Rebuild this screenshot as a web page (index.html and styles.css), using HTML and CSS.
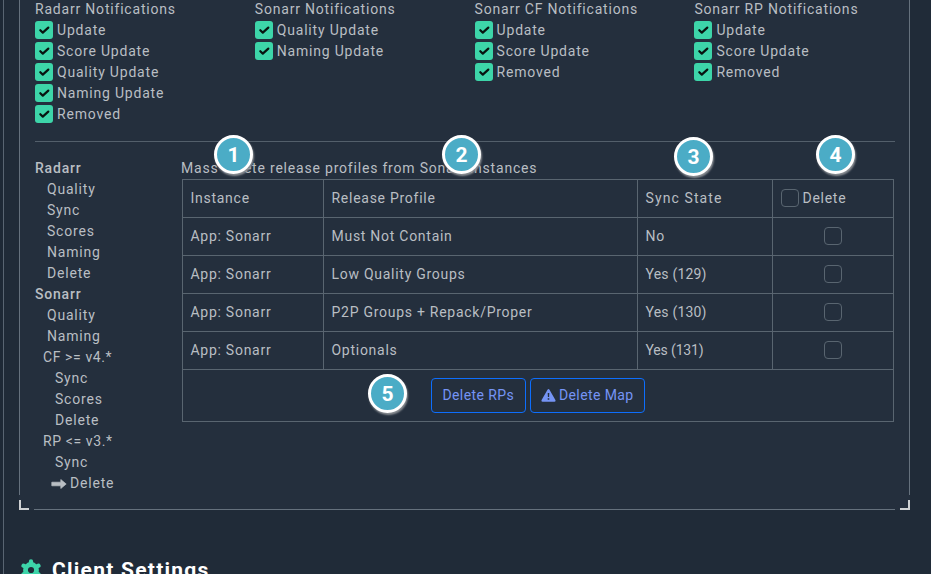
FILE: index.html
```html
<!DOCTYPE html>
<html lang="en">
<head>
<meta charset="utf-8">
<title>Notifiarr</title>
<link rel="stylesheet" href="styles.css">
</head>
<body>
<svg class="defs"><symbol id="tick" viewBox="0 0 18 18"><path d="M5.3 9.200 7.8 11.600 13.3 6.600" fill="none" stroke="#081410" stroke-width="2.200" stroke-linecap="round" stroke-linejoin="round"/></symbol></svg>
<main class="page">
<section class="panel">
  <div class="notifications">
    <div><h4>Radarr Notifications</h4>
      <label><svg class="check"><use href="#tick"/></svg>Update</label>
      <label><svg class="check"><use href="#tick"/></svg>Score Update</label>
      <label><svg class="check"><use href="#tick"/></svg>Quality Update</label>
      <label><svg class="check"><use href="#tick"/></svg>Naming Update</label>
      <label><svg class="check"><use href="#tick"/></svg>Removed</label></div>
    <div><h4>Sonarr Notifications</h4>
      <label><svg class="check"><use href="#tick"/></svg>Quality Update</label>
      <label><svg class="check"><use href="#tick"/></svg>Naming Update</label></div>
    <div><h4>Sonarr CF Notifications</h4>
      <label><svg class="check"><use href="#tick"/></svg>Update</label>
      <label><svg class="check"><use href="#tick"/></svg>Score Update</label>
      <label><svg class="check"><use href="#tick"/></svg>Removed</label></div>
    <div><h4>Sonarr RP Notifications</h4>
      <label><svg class="check"><use href="#tick"/></svg>Update</label>
      <label><svg class="check"><use href="#tick"/></svg>Score Update</label>
      <label><svg class="check"><use href="#tick"/></svg>Removed</label></div>
  </div>
  <hr>
  <div class="content">
    <nav>
      <div class="group">Radarr</div>
      <div class="item">Quality</div><div class="item">Sync</div><div class="item">Scores</div><div class="item">Naming</div><div class="item">Delete</div>
      <div class="group">Sonarr</div>
      <div class="item">Quality</div><div class="item">Naming</div>
      <div class="version">CF &gt;= v4.*</div>
      <div class="sub">Sync</div><div class="sub">Scores</div><div class="sub">Delete</div>
      <div class="version">RP &lt;= v3.*</div>
      <div class="sub">Sync</div>
      <div class="current"><svg class="arrow" viewBox="0 0 16 10"><path d="M.8 3.200h9V.5L15.200 5 9.800 9.500V6.800h-9z" fill="currentColor" stroke="currentColor" stroke-width=".7" stroke-linejoin="round"/></svg>Delete</div>
    </nav>
    <div class="profiles">
      <div class="caption">Mass delete release profiles from Sonarr instances</div>
      <table>
        <colgroup><col class="c1"><col class="c2"><col class="c3"><col class="c4"></colgroup>
        <tr><td>Instance</td><td>Release Profile</td><td class="state">Sync State</td><td><span class="all"><i class="box"></i>Delete</span></td></tr>
        <tr><td>App: Sonarr</td><td>Must Not Contain</td><td>No</td><td class="pick"><i class="box"></i></td></tr>
        <tr><td>App: Sonarr</td><td>Low Quality Groups</td><td class="synced">Yes (129)</td><td class="pick"><i class="box"></i></td></tr>
        <tr><td>App: Sonarr</td><td>P2P Groups + Repack/Proper</td><td class="synced">Yes (130)</td><td class="pick"><i class="box"></i></td></tr>
        <tr><td>App: Sonarr</td><td>Optionals</td><td class="synced last">Yes (131)</td><td class="pick"><i class="box"></i></td></tr>
        <tr class="actions"><td colspan="4"><div class="buttons"><button class="rps">Delete RPs</button><button class="map"><svg class="warn" viewBox="0 0 15 13"><path fill-rule="evenodd" d="M6.500.8q1-1.400 2 0l5.900 10.200q.6 1.500-1 1.700H1.600Q0 12.500.6 11zM6.700 4l.2 4h1.200l.2-4zM6.700 9.300v1.500h1.600V9.300z" fill="currentColor"/></svg>Delete Map</button></div></td></tr>
      </table>
    </div>
  </div>
  <i class="corner left"></i><i class="corner right"></i>
</section>
<h2><svg class="gear" viewBox="0 0 22 22"><g fill="none" stroke="#3dd5a9"><circle cx="11" cy="11" r="5.500" stroke-width="4.800"/><path d="M11 5V2.300M11 17v2.700M16.200 8l2.300-1.300M5.800 14l-2.300 1.300M16.200 14l2.300 1.300M5.800 8 3.500 6.700" stroke-width="4.200" stroke-linecap="round"/></g></svg>Client Settings</h2>
</main>
<b class="pin p1">1</b><b class="pin p2">2</b><b class="pin p3">3</b><b class="pin p4">4</b><b class="pin p5">5</b>
</body>
</html>
```
FILE: styles.css
```css
* { box-sizing: border-box; }
body { margin: 0; height: 574px; overflow: hidden; background: #1e2936; color: #b9bec3; font: 14px/21px Roboto, sans-serif; letter-spacing: .8px; }
.defs { position: absolute; width: 0; height: 0; }
.page { height: 574px; margin-left: 3px; border-left: 1px solid #596572; background: #202b38; overflow: hidden; }
.panel { position: relative; width: 891px; height: 510px; margin-left: 15px; padding: 0 15px; background: linear-gradient(#65717d, #65717d) 0 0 / 1px 495px no-repeat, linear-gradient(#65717d, #65717d) 100% 0 / 1px 495px no-repeat, linear-gradient(#65717d, #65717d) 15px 100% / 861px 1px no-repeat, #242f3d; }
.notifications { display: grid; grid-template-columns: repeat(4, 219.8px); height: 141px; margin-left: 1px; }
.notifications > div { margin-top: -1px; }
h4 { margin: 0; font-size: 14px; font-weight: 400; }
label { display: flex; align-items: flex-start; height: 21px; }
.check { width: 18px; height: 18px; margin: 1px 4px 0 0; border-radius: 3px; background: #3dd5a9; }
hr { height: 1px; margin: 0 0 0 1px; border: 0; background: #535f6b; }
.content { display: flex; padding: 16px 0 0 1px; }
nav { width: 147px; }
.group { font-weight: 500; }
.item { padding-left: 12px; }
.version { padding-left: 8px; letter-spacing: .6px; }
.sub { padding-left: 20px; }
.current { display: flex; align-items: center; padding-left: 16px; }
.arrow { width: 16px; height: 10px; margin-right: 3px; }
.profiles { width: 712px; }
.caption { height: 21px; white-space: nowrap; margin-left: -1px; }
table { width: 712px; table-layout: fixed; border-collapse: collapse; }
.c1 { width: 141px; } .c2 { width: 314px; } .c3 { width: 135px; } .c4 { width: 121px; }
td { height: 38px; padding: 0 8px 0 7.5px; border: 1px solid #596570; white-space: nowrap; letter-spacing: .73px; }
.state { letter-spacing: 1.1px; }
.synced { letter-spacing: .2px; }
.last { letter-spacing: -.15px; }
.box { display: block; width: 18px; height: 18px; border: 1px solid #596570; border-radius: 4px; }
.all { display: flex; align-items: flex-start; gap: 4px; }
.all .box { margin-top: 1px; }
.pick .box { margin: 0 auto 1px; }
.actions td { height: 52px; }
.buttons { display: flex; justify-content: center; gap: 4px; }
button { display: flex; align-items: center; justify-content: center; height: 35px; padding: 0; border: 1px solid #0d6efd; border-radius: 4px; background: none; color: #7594f5; font: inherit; letter-spacing: .4px; }
.rps { width: 95px; } .map { width: 115px; }
.warn { width: 15px; height: 13px; margin-right: 3px; }
.corner { position: absolute; bottom: 0; width: 10px; height: 10px; border-bottom: 2px solid #ced1d3; }
.left { left: 0; border-left: 2px solid #ced1d3; }
.right { right: 0; border-right: 2px solid #ced1d3; }
h2 { display: flex; align-items: center; margin: 46px 0 0 16px; height: 28px; color: #fff; font: 700 21px/28px Roboto, sans-serif; letter-spacing: 1.25px; }
.gear { width: 22px; height: 22px; margin-right: 10px; }
.pin { position: absolute; width: 39px; height: 39px; border: 3px solid #fff; border-radius: 50%; background: #4bacc6; box-shadow: 1px 2px 2px #8b8f94; color: #fff; font: 700 21px/34px Roboto, sans-serif; letter-spacing: 0; text-align: center; }
.p1 { left: 214px; top: 135px; } .p2 { left: 442px; top: 135px; } .p3 { left: 674px; top: 137px; } .p4 { left: 816px; top: 135px; } .p5 { left: 368px; top: 374px; }
```
